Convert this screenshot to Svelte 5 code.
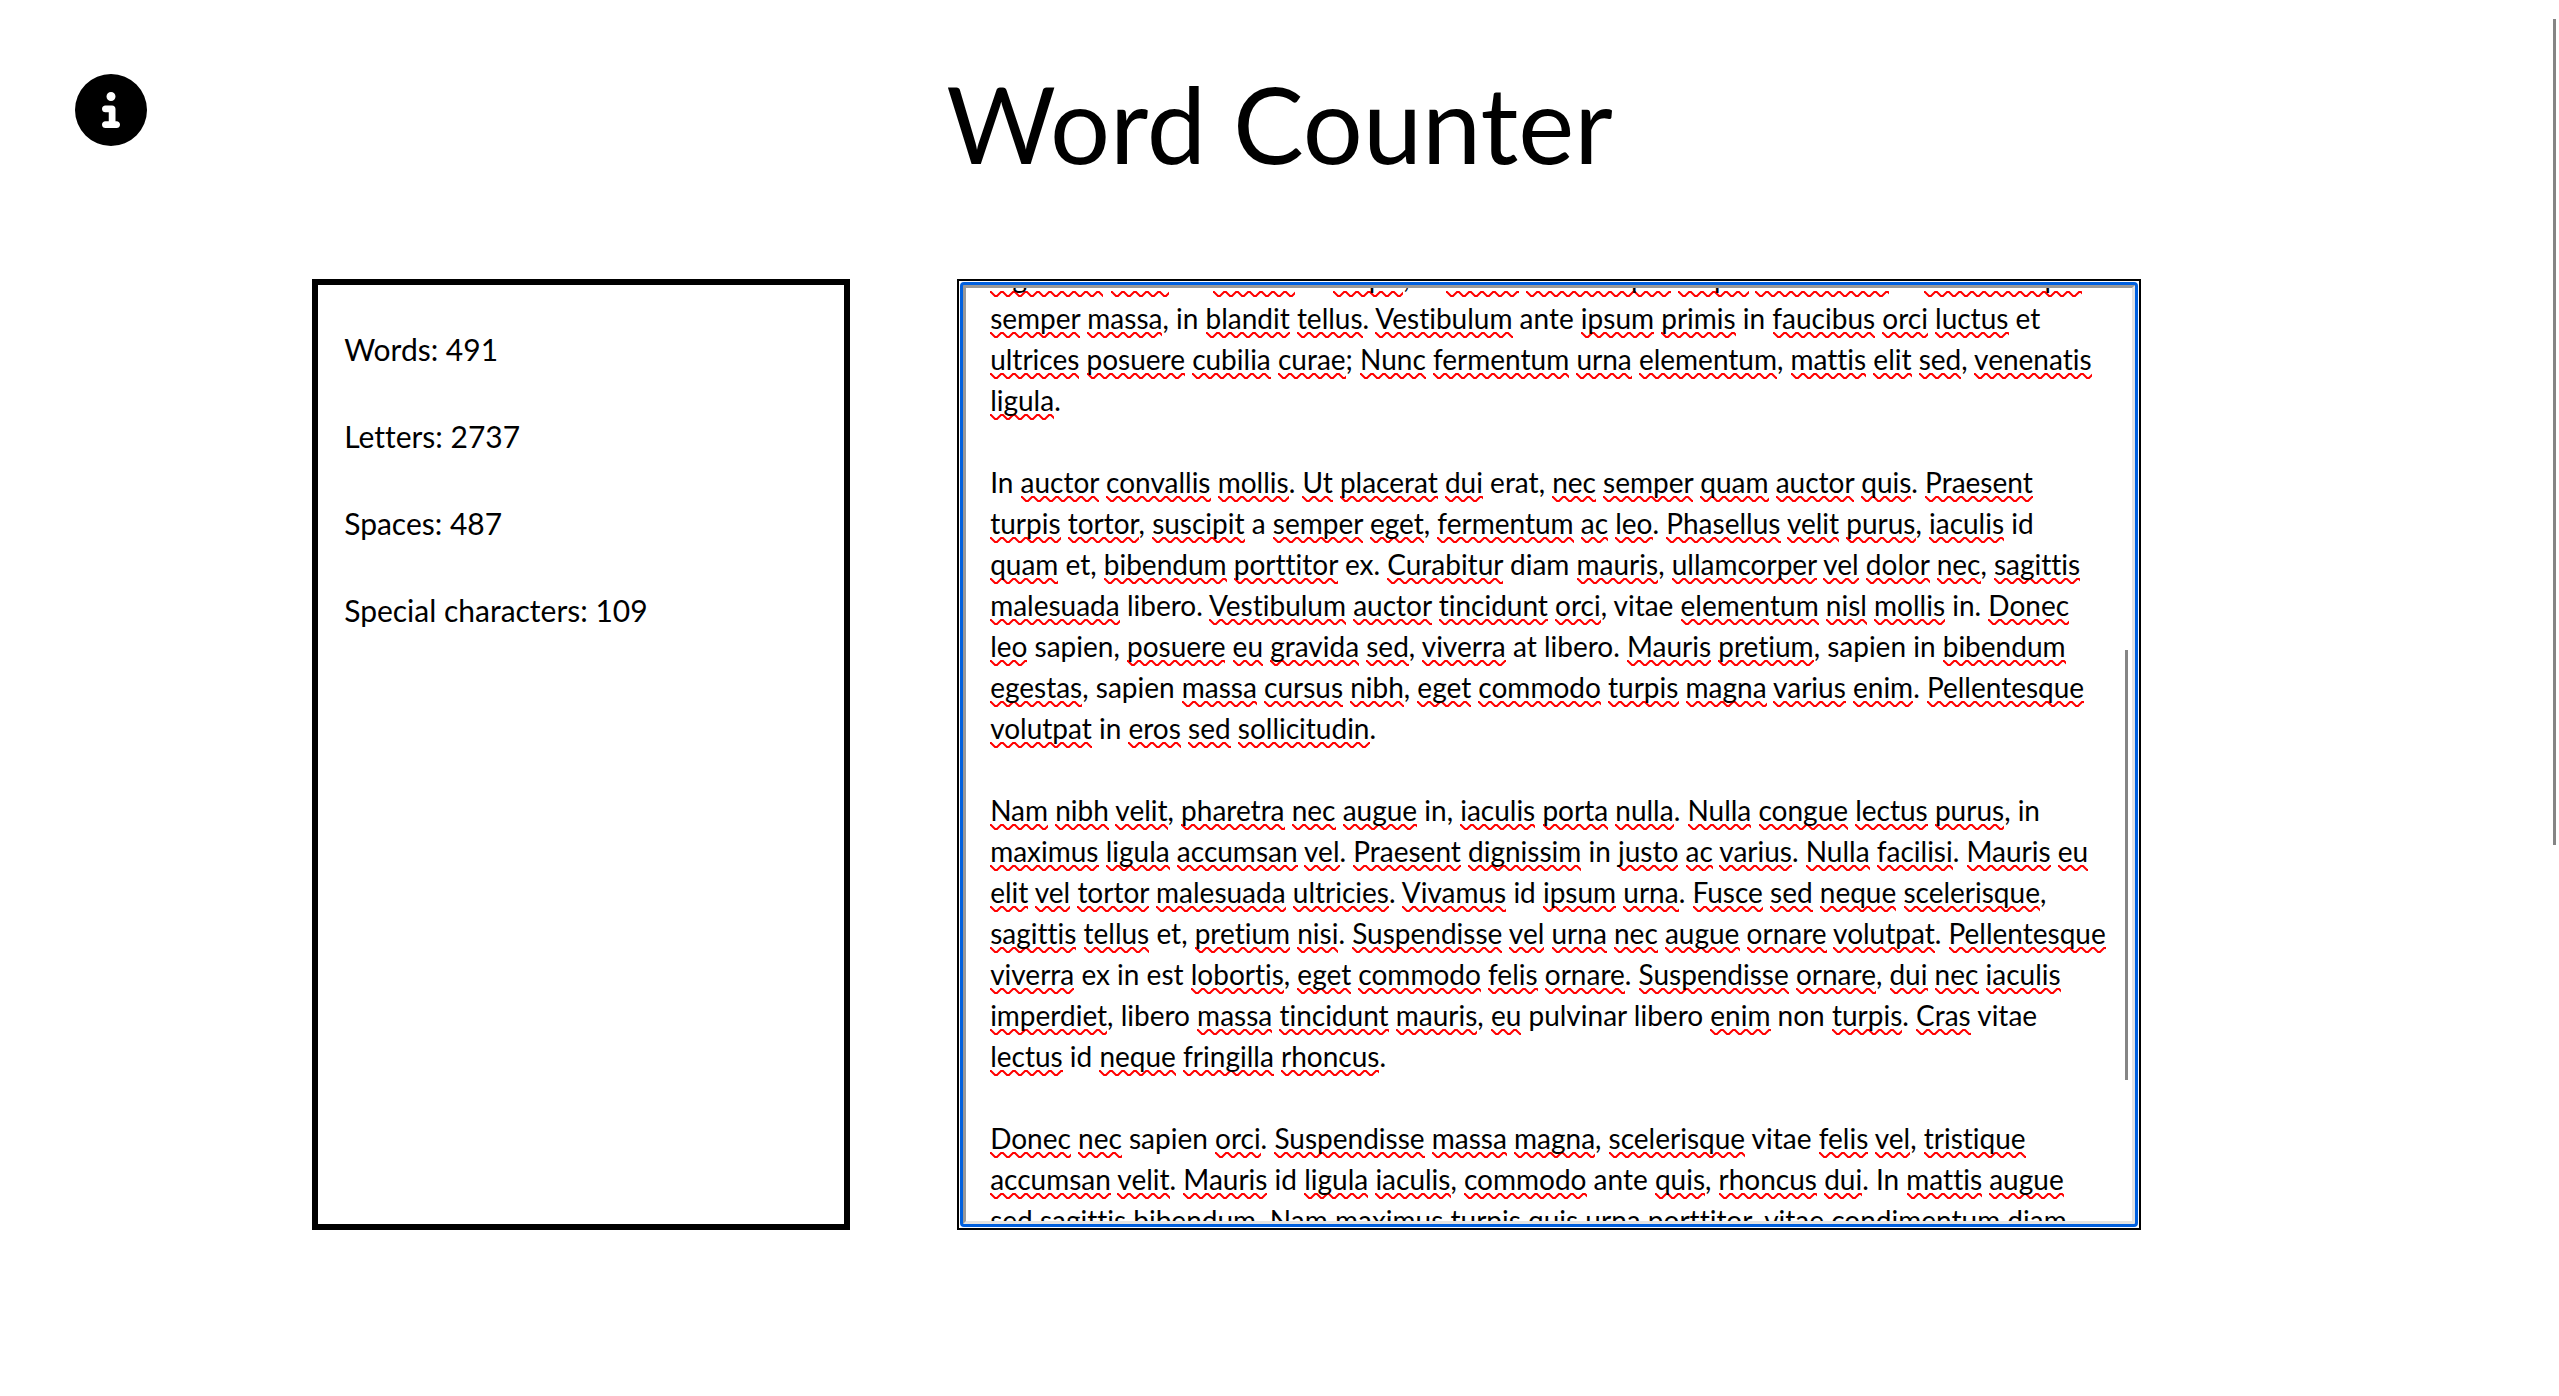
<script>
  import { onMount } from 'svelte';

  const stats = [
    { label: 'Words', value: 491 },
    { label: 'Letters', value: 2737 },
    { label: 'Spaces', value: 487 },
    { label: 'Special characters', value: 109 }
  ];

  let text = $state(
    [
      'dignissim nulla. In mauris at turpis, in lectus ullamcorper turpis vestibulum. a Pellentesque a',
      'semper massa, in blandit tellus. Vestibulum ante ipsum primis in faucibus orci luctus et',
      'ultrices posuere cubilia curae; Nunc fermentum urna elementum, mattis elit sed, venenatis',
      'ligula.',
      '',
      'In auctor convallis mollis. Ut placerat dui erat, nec semper quam auctor quis. Praesent',
      'turpis tortor, suscipit a semper eget, fermentum ac leo. Phasellus velit purus, iaculis id',
      'quam et, bibendum porttitor ex. Curabitur diam mauris, ullamcorper vel dolor nec, sagittis',
      'malesuada libero. Vestibulum auctor tincidunt orci, vitae elementum nisl mollis in. Donec',
      'leo sapien, posuere eu gravida sed, viverra at libero. Mauris pretium, sapien in bibendum',
      'egestas, sapien massa cursus nibh, eget commodo turpis magna varius enim. Pellentesque',
      'volutpat in eros sed sollicitudin.',
      '',
      'Nam nibh velit, pharetra nec augue in, iaculis porta nulla. Nulla congue lectus purus, in',
      'maximus ligula accumsan vel. Praesent dignissim in justo ac varius. Nulla facilisi. Mauris eu',
      'elit vel tortor malesuada ultricies. Vivamus id ipsum urna. Fusce sed neque scelerisque,',
      'sagittis tellus et, pretium nisi. Suspendisse vel urna nec augue ornare volutpat. Pellentesque',
      'viverra ex in est lobortis, eget commodo felis ornare. Suspendisse ornare, dui nec iaculis',
      'imperdiet, libero massa tincidunt mauris, eu pulvinar libero enim non turpis. Cras vitae',
      'lectus id neque fringilla rhoncus.',
      '',
      'Donec nec sapien orci. Suspendisse massa magna, scelerisque vitae felis vel, tristique',
      'accumsan velit. Mauris id ligula iaculis, commodo ante quis, rhoncus dui. In mattis augue',
      'sed sagittis bibendum. Nam maximus turpis quis urna porttitor, vitae condimentum diam'
    ].join('\n')
  );

  // Words the spelling checker accepts; everything else gets a squiggle.
  const known = new Set(
    'in ante et a id erat ex diam vitae sapien at libero est pulvinar non'.split(' ')
  );
  const tokens = $derived(
    text.split(/([A-Za-z]+)/).map((part, i) => ({
      part,
      wrong: i % 2 === 1 && !known.has(part.toLowerCase())
    }))
  );

  let field;
  let marks;

  function sync() {
    marks.scrollTop = field.scrollTop;
    marks.scrollLeft = field.scrollLeft;
  }

  onMount(() => {
    field.scrollTop = 31;
    sync();
  });
</script>

<div class="page">
  <header>
    <button class="info" type="button" aria-label="Information">
      <svg viewBox="0 0 512 512" aria-hidden="true">
        <path
          d="M256 512A256 256 0 1 0 256 0a256 256 0 1 0 0 512zM216 336h24V272H216c-13.3 0-24-10.7-24-24s10.7-24 24-24h48c13.3 0 24 10.7 24 24v88h8c13.3 0 24 10.7 24 24s-10.7 24-24 24H216c-13.3 0-24-10.7-24-24s10.7-24 24-24zm40-208a32 32 0 1 1 0 64 32 32 0 1 1 0-64z"
        />
      </svg>
    </button>
    <h1>Word Counter</h1>
  </header>

  <main>
    <section class="stats" aria-label="Statistics">
      {#each stats as stat}
        <p>{stat.label}: {stat.value}</p>
      {/each}
    </section>

    <div class="editor">
      <div class="marks" aria-hidden="true" bind:this={marks}
        >{#each tokens as token}{#if token.wrong}<span class="wrong">{token.part}</span
          >{:else}{token.part}{/if}{/each}</div
      >
      <textarea
        aria-label="Text to count"
        spellcheck="false"
        bind:value={text}
        bind:this={field}
        onscroll={sync}
      ></textarea>
      <span class="thumb"></span>
    </div>
  </main>
  <span class="page-thumb"></span>
</div>

<style>
  :global(body) {
    background: #fff;
    color: #000;
  }

  .page {
    min-height: 100vh;
    box-sizing: border-box;
    font-family: Lato, 'Open Sans', sans-serif;
    font-variant-ligatures: none;
  }

  header {
    display: grid;
    grid-template-columns: 1fr auto 1fr;
    align-items: start;
    padding: 60px 75px 92px;
  }

  .info {
    justify-self: start;
    width: 72px;
    height: 72px;
    margin-top: 14px;
    padding: 0;
    border: 0;
    background: none;
    cursor: pointer;
  }

  .info svg {
    display: block;
    width: 100%;
    height: 100%;
  }

  h1 {
    margin: 0;
    font-size: 106px;
    font-weight: 400;
    line-height: 127px;
  }

  main {
    display: grid;
    grid-template-columns: 5fr 11fr;
    gap: 107px;
    height: 951px;
    padding: 0 16.35% 0 12.2%;
  }

  .stats {
    display: flex;
    flex-direction: column;
    gap: 46px;
    padding: 44px 26px;
    border: 6px solid #000;
    font-size: 30px;
    line-height: 41px;
  }

  .stats p {
    margin: 0;
  }

  .editor {
    position: relative;
    display: grid;
    min-width: 0;
    min-height: 0;
    border: 2px solid #000;
    padding: 4px;
    background: #fff;
  }

  textarea,
  .marks {
    grid-area: 1 / 1;
    box-sizing: border-box;
    min-width: 0;
    min-height: 0;
    width: 100%;
    height: 100%;
    margin: 0;
    padding: 0 24px;
    border: 3px solid transparent;
    font-family: inherit;
    font-size: 28px;
    font-variant-ligatures: none;
    line-height: 41px;
    white-space: pre;
    overflow: hidden;
  }

  textarea {
    position: relative;
    display: block;
    border-color: #999 #e3e3e3 #e3e3e3 #999;
    border-radius: 1px;
    outline: 3px solid #0060df;
    background: transparent;
    color: #000;
    resize: none;
  }

  .marks {
    color: transparent;
    user-select: none;
  }

  .wrong {
    padding-bottom: 3px;
    background: url("data:image/svg+xml,%3Csvg xmlns='http://www.w3.org/2000/svg' width='12' height='6'%3E%3Cpath d='M-2 1H1L5 5H7L11 1H14' fill='none' stroke='red' stroke-width='2'/%3E%3C/svg%3E")
      left bottom repeat-x;
  }

  .thumb,
  .page-thumb {
    width: 3px;
    background: #858585;
  }

  .thumb {
    position: absolute;
    top: 39%;
    right: 11px;
    height: 430px;
  }

  .page-thumb {
    position: fixed;
    top: 19px;
    right: 3px;
    height: 826px;
  }
</style>
